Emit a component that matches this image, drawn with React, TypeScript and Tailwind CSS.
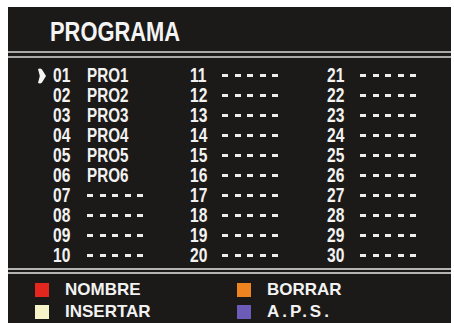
import React from 'react';

const FONT = { fontFamily: "'Liberation Sans', Arial, sans-serif" };

type Slot = { num: string; name?: string };

const col1: Slot[] = [
  { num: '01', name: 'PRO1' },
  { num: '02', name: 'PRO2' },
  { num: '03', name: 'PRO3' },
  { num: '04', name: 'PRO4' },
  { num: '05', name: 'PRO5' },
  { num: '06', name: 'PRO6' },
  { num: '07' },
  { num: '08' },
  { num: '09' },
  { num: '10' },
];
const col2: Slot[] = Array.from({ length: 10 }, (_, i) => ({ num: String(11 + i) }));
const col3: Slot[] = Array.from({ length: 10 }, (_, i) => ({ num: String(21 + i) }));

function Dashes() {
  return (
    <div className="flex items-center gap-[6.5px]">
      {[0, 1, 2, 3, 4].map((i) => (
        <span key={i} className="block w-[6px] h-[3px] bg-[#ededed]" />
      ))}
    </div>
  );
}

function Cursor() {
  return (
    <svg width="9" height="16" viewBox="0 0 9 16" className="block">
      <path d="M1 1 Q3.5 0 5 1.5 L9 8 L5 14.5 Q3.5 16 1 15 L2.8 8 Z" fill="#f4f4f4" />
    </svg>
  );
}

// una columna de la lista de programas
function Column({ slots, numWidth, withCursor, width }: { slots: Slot[]; numWidth: string; withCursor?: boolean; width: string }) {
  return (
    <div className={`flex flex-col ${width}`}>
      {slots.map((s, i) => (
        <div key={s.num} className="flex items-center h-[20px] leading-none">
          {withCursor && (
            <div className="w-[16px] flex items-center">{i === 0 && <Cursor />}</div>
          )}
          <div className={`${numWidth} shrink-0 flex items-center`}>
            <span className="block origin-left scale-x-[0.8] text-[19.5px] font-bold leading-[19px] text-[#f2f2f2]">
              {s.num}
            </span>
          </div>
          {s.name ? (
            <span className="block origin-left scale-x-[0.78] text-[19.5px] font-bold leading-[19px] text-[#f2f2f2]">
              {s.name}
            </span>
          ) : (
            <Dashes />
          )}
        </div>
      ))}
    </div>
  );
}

function LegendItem({ color, label, tracking }: { color: string; label: string; tracking?: string }) {
  return (
    <div className="flex items-center h-[22px]">
      <span className={`block w-[14px] h-[14px] ${color}`} />
      <span className={`ml-[16px] text-[17px] font-bold leading-none text-[#f2f2f2] ${tracking ?? ''}`}>{label}</span>
    </div>
  );
}

export default function App() {
  return (
    <div className="w-[454px] h-[323px] bg-white pl-[8px] pt-[7px] pr-[3px] overflow-hidden" style={FONT}>
      <div className="h-full bg-[#1c1a18] flex flex-col">
        {/* título */}
        <div className="h-[44px] pl-[42px] pt-[12px]">
          <span className="inline-block origin-left scale-x-[0.81] text-[27px] font-bold leading-none text-[#f4f4f4]">
            PROGRAMA
          </span>
        </div>
        <div className="h-[2px] bg-[#a9a9a9]" />
        <div className="h-[3px]" />
        <div className="h-[2px] bg-[#a9a9a9]" />

        {/* lista */}
        <div className="h-[211px] pt-[8px] pl-[29px] flex">
          <Column slots={col1} numWidth="w-[34px]" withCursor width="w-[153px]" />
          <Column slots={col2} numWidth="w-[32px]" width="w-[137px]" />
          <Column slots={col3} numWidth="w-[33px]" width="w-[100px]" />
        </div>
        <div className="h-[2px] bg-[#b4b4b4]" />
        <div className="h-[2px]" />
        <div className="h-[2px] bg-[#b4b4b4]" />

        {/* leyenda */}
        <div className="pt-[5px] pl-[27px] grid grid-cols-[202px_1fr]">
          <LegendItem color="bg-[#e3271f]" label="NOMBRE" />
          <LegendItem color="bg-[#ee8420]" label="BORRAR" />
          <LegendItem color="bg-[#f6f3c8]" label="INSERTAR" />
          <LegendItem color="bg-[#6c5cb8]" label="A.P.S." tracking="tracking-[3px]" />
        </div>
      </div>
    </div>
  );
}
